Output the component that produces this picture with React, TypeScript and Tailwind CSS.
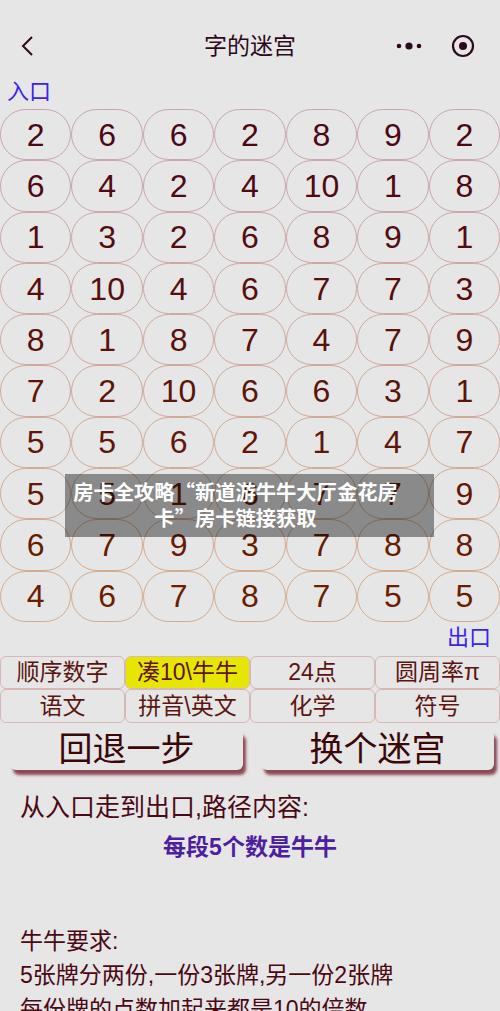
import React from 'react';

const rows = [
  [2, 6, 6, 2, 8, 9, 2],
  [6, 4, 2, 4, 10, 1, 8],
  [1, 3, 2, 6, 8, 9, 1],
  [4, 10, 4, 6, 7, 7, 3],
  [8, 1, 8, 7, 4, 7, 9],
  [7, 2, 10, 6, 6, 3, 1],
  [5, 5, 6, 2, 1, 4, 7],
  [5, 5, 1, 6, 7, 7, 9],
  [6, 7, 9, 3, 7, 8, 8],
  [4, 6, 7, 8, 7, 5, 5],
];

const tabs = ['顺序数字', '凑10\\牛牛', '24点', '圆周率π', '语文', '拼音\\英文', '化学', '符号'];

// top rows are maroon, bottom rows drift to brown
const mix = (a: number[], b: number[], t: number) =>
  `rgb(${a.map((v, i) => Math.round(v + (b[i] - v) * t)).join(',')})`;

const font = { fontFamily: '"Liberation Sans", "Noto Sans CJK SC", sans-serif' };

export default function App() {
  return (
    <div className="w-[500px] h-[1011px] overflow-hidden bg-[#e6e6e6] relative" style={font}>
      {/* nav bar */}
      <div className="h-[72px] pt-6">
        <div className="h-11 flex items-center relative">
          <svg className="absolute left-[20px]" width="16" height="24" viewBox="0 0 16 24">
            <path d="M12 3 L3 12 L12 21" fill="none" stroke="#2c0a1e" strokeWidth="2" />
          </svg>
          <div className="flex-1 text-center text-[23px] text-[#2c0a1e]">字的迷宫</div>
          <svg className="absolute left-[395px]" width="28" height="10" viewBox="0 0 28 10">
            <circle cx="4" cy="5" r="2.3" fill="#2c0a1e" />
            <circle cx="14" cy="5" r="3.6" fill="#2c0a1e" />
            <circle cx="24" cy="5" r="2.3" fill="#2c0a1e" />
          </svg>
          <svg className="absolute left-[451px]" width="24" height="24" viewBox="0 0 24 24">
            <circle cx="12" cy="12" r="10" fill="none" stroke="#2c0a1e" strokeWidth="2.2" />
            <circle cx="12" cy="12" r="4" fill="#2c0a1e" />
          </svg>
        </div>
      </div>

      <div className="mt-2 pl-[7px] text-[22px] leading-6 text-[#3b22f0]">入口</div>

      {/* maze */}
      <div className="mt-[5px] relative">
        {rows.map((r, ri) => {
          const t = ri / (rows.length - 1);
          return (
            <div key={ri} className="grid grid-cols-7 h-[51.3px]">
              {r.map((n, ci) => (
                <div
                  key={ci}
                  className="rounded-full border flex items-center justify-center text-[32px]"
                  style={{ color: mix([74, 8, 20], [106, 30, 0], t), borderColor: mix([200, 166, 176], [212, 172, 140], t) }}
                >
                  {n}
                </div>
              ))}
            </div>
          );
        })}

        {/* toast overlay */}
        <div
          className="absolute left-[65px] top-[365px] w-[369px] h-[63px] bg-black/40 pl-[2px] pr-[30px] pt-[4px] text-center text-white font-bold text-[20.3px] leading-[26px]"
          style={{ fontFamily: '"Noto Sans CJK SC", sans-serif' }}
        >
          房卡全攻略“新道游牛牛大厅金花房卡”房卡链接获取
        </div>
      </div>

      <div className="mt-[4px] pr-[9px] text-right text-[22px] leading-6 text-[#3b22f0]">出口</div>

      {/* category tabs */}
      <div className="mt-[6px] grid grid-cols-4">
        {tabs.map((t, i) => (
          <div
            key={t}
            className={`h-[33.5px] rounded-md border border-[#d6b8b8] flex items-center justify-center text-[23px] text-[#5a1510] ${i === 1 ? 'bg-[#e6e600]' : ''}`}
          >
            {t}
          </div>
        ))}
      </div>

      {/* actions */}
      <div className="mt-[7px] pl-[10px] pr-[6px] grid grid-cols-2 gap-[18px]">
        {['回退一步', '换个迷宫'].map((b) => (
          <div
            key={b}
            className="h-[40px] rounded-md bg-[#e6e6e6] flex items-center justify-center text-[34px] text-[#3a0808] shadow-[3px_5px_3px_#8b4a55]"
          >
            {b}
          </div>
        ))}
      </div>

      {/* rules */}
      <div className="mt-[22px] pl-5 text-[#4a0814]">
        <div className="text-[25px] leading-[30px]">从入口走到出口,路径内容:</div>
        <div className="mt-[10px] pr-5 text-center text-[23px] leading-[30px] font-bold text-[#4c1fa0]">每段5个数是牛牛</div>
        <div className="mt-[62px] text-[23px] leading-[34px]">牛牛要求:</div>
        <div className="text-[23px] leading-[34px]">5张牌分两份,一份3张牌,另一份2张牌</div>
        <div className="text-[23px] leading-[34px]">每份牌的点数加起来都是10的倍数</div>
      </div>
    </div>
  );
}
